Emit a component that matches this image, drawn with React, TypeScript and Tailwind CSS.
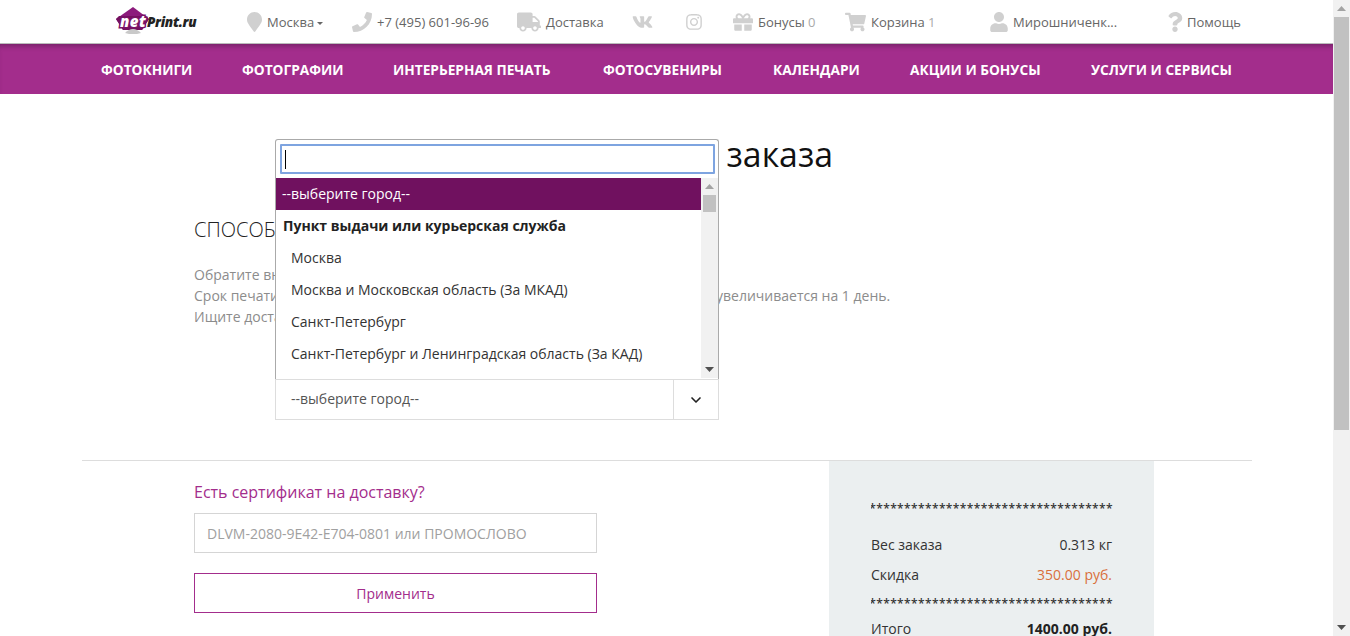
import { ChevronDown } from 'lucide-react';
import {
  FaGift,
  FaInstagram,
  FaMapMarker,
  FaPhone,
  FaQuestion,
  FaShoppingCart,
  FaTruck,
  FaUser,
  FaVk,
} from 'react-icons/fa';

const NAV_ITEMS = [
  { label: 'ФОТОКНИГИ', width: 'w-[141px]' },
  { label: 'ФОТОГРАФИИ', width: 'w-[151px]' },
  { label: 'ИНТЕРЬЕРНАЯ ПЕЧАТЬ', width: 'w-[210px]' },
  { label: 'ФОТОСУВЕНИРЫ', width: 'w-[170px]' },
  { label: 'КАЛЕНДАРИ', width: 'w-[137px]' },
  { label: 'АКЦИИ И БОНУСЫ', width: 'w-[181px]' },
  { label: 'УСЛУГИ И СЕРВИСЫ', width: 'w-[141px]' },
];

const CITIES = [
  'Москва',
  'Москва и Московская область (За МКАД)',
  'Санкт-Петербург',
  'Санкт-Петербург и Ленинградская область (За КАД)',
];

const STARS = '*'.repeat(35);

const Logo = () => (
  <div className="relative h-[42px] w-[132px] shrink-0">
    <svg className="absolute left-0 top-[6px]" width="36" height="28" viewBox="0 0 36 28">
      <path d="M18 0 L34 12 L27 23 L8 23 L1 12 Z" fill="#8c1a7c" />
      <path d="M1 12 L4 9 L31 9 L34 12 L27 23 L8 23 Z" fill="#74105f" />
      <path d="M10 26 Q18 18 26 26 L22 27 L14 27 Z" fill="#c9c9c9" />
    </svg>
    <span className="absolute left-[5px] top-[10px] text-[15px] font-extrabold italic leading-[20px] tracking-[0.5px] text-white [-webkit-text-stroke:3px_#7a1268] [paint-order:stroke_fill]">
      net
    </span>
    <span className="absolute left-[32px] top-[12px] text-[13.5px] font-extrabold italic leading-[18px] tracking-[-0.3px] text-[#222]">
      Print.ru
    </span>
  </div>
);

const TopBar = () => (
  <header className="relative z-10 flex h-[44px] items-center border-b border-[#bbb] pl-[115px] pt-[1px] text-[13px] text-[#666]">
    <Logo />
    <div className="flex w-[105px] items-center gap-[5px]">
      <FaMapMarker className="h-[20px] w-[15px] text-[#d0d0d0]" />
      <span className="pt-[1px]">Москва</span>
      <span className="ml-[-2px] mt-[3px] border-x-[3px] border-t-[3px] border-x-transparent border-t-[#666]" />
    </div>
    <div className="flex w-[165px] items-center gap-[5px]">
      <FaPhone className="h-[20px] w-[20px] text-[#d0d0d0]" />
      <span className="pt-[1px]">+7 (495) 601-96-96</span>
    </div>
    <div className="flex w-[115px] items-center gap-[5px]">
      <FaTruck className="h-[20px] w-[24px] text-[#d0d0d0]" />
      <span className="pt-[1px]">Доставка</span>
    </div>
    <div className="flex w-[53px] items-center">
      <FaVk className="h-[20px] w-[21px] text-[#d0d0d0]" />
    </div>
    <div className="flex w-[48px] items-center">
      <FaInstagram className="h-[18px] w-[18px] text-[#d0d0d0]" />
    </div>
    <div className="flex w-[112px] items-center gap-[5px]">
      <FaGift className="h-[20px] w-[20px] text-[#d0d0d0]" />
      <span className="pt-[1px]">
        Бонусы <span className="text-[#aaa]">0</span>
      </span>
    </div>
    <div className="flex w-[145px] items-center gap-[5px]">
      <FaShoppingCart className="h-[20px] w-[21px] text-[#d0d0d0]" />
      <span className="pt-[1px]">
        Корзина <span className="text-[#aaa]">1</span>
      </span>
    </div>
    <div className="flex w-[177px] items-center gap-[5px]">
      <FaUser className="h-[20px] w-[18px] text-[#d0d0d0]" />
      <span className="pt-[1px]">Мирошниченк...</span>
    </div>
    <div className="flex items-center gap-[4px]">
      <FaQuestion className="h-[20px] w-[16px] text-[#d0d0d0]" />
      <span className="pt-[1px]">Помощь</span>
    </div>
  </header>
);

const NavBar = () => (
  <nav className="flex h-[50px] items-center bg-[#a32d8c] pl-[101px] pt-[2px] text-[13.7px] font-bold text-white shadow-[inset_0_5px_5px_-3px_rgba(60,20,60,0.45)]">
    {NAV_ITEMS.map((item) => (
      <span key={item.label} className={`${item.width} shrink-0 whitespace-nowrap`}>
        {item.label}
      </span>
    ))}
  </nav>
);

const ScrollArrow = ({ up, color }: { up?: boolean; color: string }) => (
  <svg width="9" height="5" viewBox="0 0 9 5">
    <path d={up ? 'M4.5 0 L9 5 L0 5 Z' : 'M0 0 L9 0 L4.5 5 Z'} fill={color} />
  </svg>
);

const CityDropdown = () => (
  <div className="absolute left-[275px] top-[139px] z-20 h-[240px] w-[444px] overflow-hidden rounded-t-[3px] border border-b-0 border-[#aaa] bg-white">
    <div className="px-[4px] pt-[4px]">
      <div className="flex h-[30px] w-[435px] items-center rounded-[1px] border-2 border-[#7ea4e0] pl-[3px]">
        <span className="h-[19px] w-px bg-black" />
      </div>
    </div>
    <div className="mt-[4px] flex h-[200px]">
      <ul className="w-[426px] overflow-hidden text-[14px] text-[#333]">
        <li className="flex h-[32px] items-center bg-[#70115f] pb-[2px] pl-[6px] text-white">--выберите город--</li>
        <li className="flex h-[32px] items-center pb-[2px] pl-[7px] font-bold text-[#222]">
          Пункт выдачи или курьерская служба
        </li>
        {CITIES.map((city) => (
          <li key={city} className="flex h-[32px] items-center pb-[2px] pl-[15px]">
            {city}
          </li>
        ))}
      </ul>
      <div className="flex w-[17px] flex-col items-center bg-[#f1f1f1]">
        <div className="flex h-[17px] items-center justify-center">
          <ScrollArrow up color="#a3a3a3" />
        </div>
        <div className="h-[17px] w-[13px] bg-[#c1c1c1]" />
        <div className="mt-auto flex h-[17px] items-center justify-center">
          <ScrollArrow color="#505050" />
        </div>
      </div>
    </div>
  </div>
);

const StarLine = () => (
  <div className="flex h-[20px] w-[242px] justify-end overflow-hidden whitespace-nowrap text-[12px] font-semibold leading-[20px] tracking-[0.39px] text-[#333]">
    {STARS}
  </div>
);

const Receipt = () => (
  <aside className="ml-[232px] h-[175px] w-[325px] bg-[#ebeff0] px-[42px] pt-[38px] text-[14px] text-[#333]">
    <StarLine />
    <div className="mt-[10px] flex h-[30px] items-center justify-between">
      <span>Вес заказа</span>
      <span>0.313 кг</span>
    </div>
    <div className="flex h-[30px] items-center justify-between">
      <span>Скидка</span>
      <span className="text-[#d9703c]">350.00 руб.</span>
    </div>
    <div className="mt-[5px]">
      <StarLine />
    </div>
    <div className="mt-[-1px] flex h-[30px] items-center justify-between">
      <span>Итого</span>
      <span className="font-bold text-[#222]">1400.00 руб.</span>
    </div>
  </aside>
);

const Certificate = () => (
  <div className="w-[403px] pt-[20px]">
    <h3 className="text-[16px] leading-[22px] text-[#a32d8c]">Есть сертификат на доставку?</h3>
    <input
      readOnly
      placeholder="DLVM-2080-9E42-E704-0801 или ПРОМОСЛОВО"
      className="mt-[10px] h-[40px] w-full border border-[#d5d5d5] px-[12px] text-[14px] outline-none placeholder:text-[#a0a0a0]"
    />
    <button className="mt-[20px] h-[40px] w-full border border-[#a32d8c] text-[14px] text-[#a32d8c]">
      Применить
    </button>
  </div>
);

export default function App() {
  return (
    <div className="flex h-screen overflow-hidden bg-white font-['Open_Sans',sans-serif]">
      <div className="relative w-[1333px] shrink-0">
        <TopBar />
        <NavBar />

        <main className="pl-[82px]">
          <div className="flex h-[123px] justify-end pr-[500px] pt-[37px]">
            <h1 className="whitespace-nowrap text-[33.8px] leading-[46px] text-[#111]">Оформление заказа</h1>
          </div>

          <div className="pl-[112px]">
            <h2 className="text-[20px] font-light leading-[26px] text-[#222]">СПОСОБ ДОСТАВКИ</h2>
            <div className="mt-[21px] text-[14px] leading-[21px] text-[#8c8c8c]">
              <p>Обратите внимание на сроки доставки.</p>
              <p className="flex whitespace-nowrap">
                <span className="w-[522px] overflow-hidden">Срок печати при заказе после 17:00 по Москве</span>
                <span>увеличивается на 1 день.</span>
              </p>
              <p>Ищите доставку рядом с вами.</p>
            </div>
          </div>

          <div className="ml-[193px] mt-[52px] flex h-[41px] w-[444px] border border-[#ddd] text-[14px] text-[#555]">
            <div className="flex flex-1 items-center border-r border-[#ddd] pb-[2px] pl-[15px]">--выберите город--</div>
            <div className="flex w-[44px] items-center justify-center">
              <ChevronDown className="h-[16px] w-[16px] text-[#222]" strokeWidth={2.5} />
            </div>
          </div>

          <div className="mt-[40px] w-[1170px] border-t border-[#ddd]">
            <div className="flex pl-[112px]">
              <Certificate />
              <Receipt />
            </div>
          </div>
        </main>

        <CityDropdown />
      </div>

      <div className="flex w-[17px] shrink-0 flex-col items-center bg-[#f1f1f1]">
        <div className="flex h-[17px] items-center justify-center">
          <ScrollArrow up color="#a3a3a3" />
        </div>
        <div className="h-[413px] w-[15px] bg-[#c1c1c1]" />
        <div className="mt-auto flex h-[17px] items-center justify-center">
          <ScrollArrow color="#505050" />
        </div>
      </div>
    </div>
  );
}
